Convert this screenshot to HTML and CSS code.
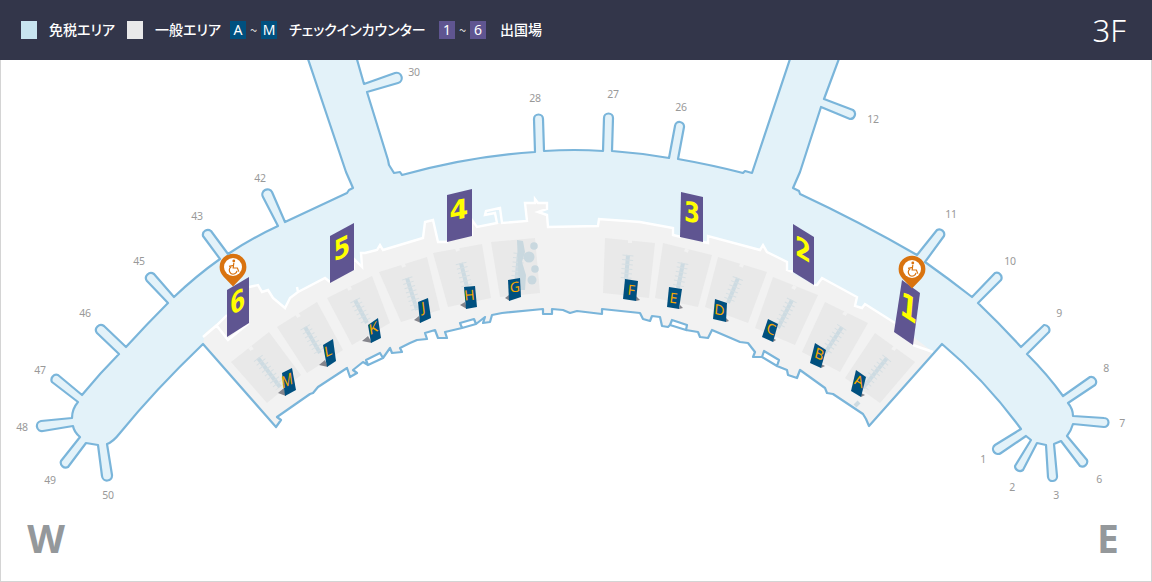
FILE: index.html
```html
<!DOCTYPE html>
<html lang="ja">
<head>
  <meta charset="UTF-8">
  <title>3F フロアマップ</title>
  <link rel="stylesheet" href="styles.css">
</head>
<body>

<div class="page">
  <header class="floor-bar">
    <div class="legend">
      <span class="swatch swatch-duty"></span>
      <span class="legend-text text-duty">免税エリア</span>
      <span class="swatch swatch-general"></span>
      <span class="legend-text text-general">一般エリア</span>
      <span class="chip chip-counter">A</span>
      <span class="tilde">~</span>
      <span class="chip chip-counter">M</span>
      <span class="legend-text text-counter">チェックインカウンター</span>
      <span class="chip chip-gate">1</span>
      <span class="tilde">~</span>
      <span class="chip chip-gate">6</span>
      <span class="legend-text text-gate">出国場</span>
    </div>
    <div class="floor-name">3F</div>
  </header>

  <main class="map">
    <svg class="map-svg" viewBox="1 60 1150 521" width="1150" height="521">
      <defs>
        <path id="outline" d="M107 444 L112 475 A5 5 0 0 1 102 476 L98 445 L86 443 L68 467 A5 5 0 0 1 61 461 L80 437 Q74 432 73 426 L43 431 A5 5 0 0 1 41 421 L72 418 Q72 409 78 402 L52 382 A5 5 0 0 1 58 375 L82 395 Q100 373 119 354 L97 333 A5 5 0 0 1 104 326 L126 347 Q147 324 168 303 L147 281 A5 5 0 0 1 154 274 L174 297 Q196 276 220 259 L203 236 A5 5 0 0 1 211 231 L228 254 Q252 238 278 226 L263 197 A5 5 0 0 1 272 192 L285 222 L347 193 L349 190 L353 188 L346 172 L307 56 L356 56 L364 84 L395 73 A5 5 0 0 1 398 83 L367 92 L388 160 L389 165 L394 173 L400 172 L402 175 Q470 156 535 152 L534 119 A4.5 4.5 0 0 1 543 119 L544 151 Q575 149 603 151 L604 118 A4.5 4.5 0 0 1 613 118 L612 151 Q640 153 669 158 L675 126 A4.5 4.5 0 0 1 684 127 L678 159 Q712 165 743 173 L745 171 L752 173 L757 158 L791 56 L840 56 L824 99 L853 110 A5 5 0 0 1 850 119 L821 107 L800 172 L793 188 L799 191 L800 194 Q860 222 917 255 L937 230 A5 5 0 0 1 944 236 L925 262 Q949 279 972 297 L995 273 A5 5 0 0 1 1001 280 L978 303 Q1000 324 1021 347 L1044 325 A5 5 0 0 1 1049 332 L1027 354 Q1048 375 1063 396 L1090 377 A5 5 0 0 1 1095 385 L1068 403 Q1073 409 1073 416 L1104 418 A4.5 4.5 0 0 1 1104 427 L1073 424 Q1071 431 1067 436 L1087 460 A5 5 0 0 1 1080 466 L1061 441 L1054 444 L1057 476 A4.5 4.5 0 0 1 1048 477 L1046 445 L1037 443 L1023 470 A5 5 0 0 1 1015 466 L1031 440 L1026 436 L1001 453 A5 5 0 0 1 995 445 L1021 429 Q985 380 942 344 L869 426 L866 419 L863 414 L833 394 L827 393 L825 388 L800 370 L797 378 L788 375 L787 370 L777 366 L762 357 L753 357 L755 352 L748 343 L740 342 L712 330 L708 338 L700 337 L698 332 L686 330 L670 325 L668 327 L662 326 L660 317 L652 316 L650 321 L643 319 L640 313 L602 309 L602 314 L577 311 L570 313 L563 310 L552 309 L552 314 L543 314 L543 309 L502 313 L492 315 L490 322 L483 323 L485 317 L476 324 L462 328 L445 332 L447 338 L438 338 L435 330 L425 333 L427 339 L417 340 L410 343 L400 348 L402 352 L392 353 L390 348 L383 358 L368 365 L363 362 L353 370 L357 373 L350 377 L347 368 L318 387 L313 393 L310 394 L277 417 L281 420 L276 427 L203 344 Q155 390 120 433 Q113 442 107 444 Z M777 366 L779 360 L764 351 L762 357 Z M686 330 L687 325 L672 320 L670 325 Z M476 324 L474 319 L460 323 L462 328 Z M383 358 L380 353 L366 360 L368 365 Z"/>
        <clipPath id="inside">
          <use href="#outline"/>
        </clipPath>
        <g id="wheelchair" class="wheel-icon">
          <circle class="wheel-head" cx="0.8" cy="-6" r="1.4"/>
          <path d="M0.8 -4 L0.2 1 L4.4 1 L5.8 4.6"/>
          <path d="M0.6 -1.6 L-4 -0.6"/>
          <path d="M-1.8 -0.2 A3.9 3.9 0 1 0 4 3.8"/>
        </g>
      </defs>

      <use href="#outline" class="air-fill"/>

      <path class="land" clip-path="url(#inside)" d="M203 344 L205 333 L227 315 L249 287 L258 285 L262 292 L268 290 L273 298 L285 308 L290 298 L297 293 L298 292 L325 278 L330 282 L354 270 L353 258 L362 267 L361 253 L365 253 L377 250 L380 245 L383 250 L423 238 L425 222 L433 220 L438 242 L472 236 L472 220 L477 227 L497 223 L502 223 L527 221 L525 203 L535 203 L535 199 L538 203 L547 203 L547 209 L538 212 L547 215 L548 227 L598 226 L599 219 L640 222 L673 228 L673 235 L703 242 L708 243 L708 236 L760 250 L763 245 L767 252 L787 262 L787 270 L814 285 L817 285 L822 278 L857 297 L855 306 L862 308 L865 304 L895 323 L933 352 L942 344 L869 432 L276 432 Z"/>

      <path class="land-edge" d="M203 337 L217 325 L227 315 M217 326 L228 340 L249 323 M249 287 L258 285 L262 292 L268 290 L273 298 L285 308 L290 298 L298 292 L297 287 L298 292 L325 278 L330 282 M354 270 L353 258 L362 267 L361 253 L365 253 L377 250 L380 245 L383 250 L423 238 L425 222 L433 220 L438 242 L448 242 M472 236 L472 220 L477 227 L497 223 L495 213 L485 215 L486 211 L500 208 L502 223 L527 221 L525 203 L535 203 L535 199 L538 203 L547 203 L547 209 L538 212 L547 215 L548 227 L598 226 L599 219 L640 222 L673 228 L673 235 L681 237 M703 242 L708 243 L708 236 L760 250 L763 245 L767 252 L787 262 L787 270 L793 272 M814 285 L817 285 L822 278 L857 297 L855 306 L862 308 L865 304 L895 323 M913 345 L933 352"/>

      <polygon class="zone" points="231,362 269,332 301,375 267,403"/>
      <polygon class="zone" points="277,327 317,302 343,350 307,373"/>
      <polygon class="zone" points="327,298 372,276 390,323 352,345"/>
      <polygon class="zone" points="379,272 427,257 440,310 401,322"/>
      <polygon class="zone" points="433,253 482,244 491,298 448,307"/>
      <polygon class="zone" points="491,242 535,238 540,293 500,297"/>
      <polygon class="zone" points="605,238 655,243 649,298 603,293"/>
      <polygon class="zone" points="663,243 712,255 698,307 655,298"/>
      <polygon class="zone" points="718,257 767,272 748,323 705,307"/>
      <polygon class="zone" points="773,277 818,295 795,345 755,328"/>
      <polygon class="zone" points="825,302 868,323 840,372 802,352"/>
      <polygon class="zone" points="875,333 915,362 880,403 845,378"/>

      <g class="zone-notches">
        <line x1="250" y1="347" x2="252" y2="350"/>
        <line x1="297" y1="314" x2="299" y2="317"/>
        <line x1="349" y1="287" x2="350" y2="290"/>
        <line x1="403" y1="264" x2="404" y2="267"/>
        <line x1="457" y1="248" x2="458" y2="251"/>
        <line x1="630" y1="240" x2="630" y2="243"/>
        <line x1="687" y1="249" x2="686" y2="252"/>
        <line x1="742" y1="264" x2="741" y2="267"/>
        <line x1="795" y1="286" x2="793" y2="289"/>
        <line x1="846" y1="312" x2="844" y2="315"/>
        <line x1="895" y1="347" x2="893" y2="350"/>
      </g>

      <g class="belts">
        <line x1="258" y1="358" x2="280" y2="387"/>
        <line x1="305" y1="327" x2="320" y2="353"/>
        <line x1="355" y1="300" x2="367" y2="323"/>
        <line x1="407" y1="278" x2="417" y2="310"/>
        <line x1="461" y1="263" x2="467" y2="287"/>
        <line x1="519" y1="253" x2="516" y2="285"/>
        <line x1="628" y1="255" x2="626" y2="280"/>
        <line x1="683" y1="263" x2="678" y2="288"/>
        <line x1="738" y1="278" x2="728" y2="303"/>
        <line x1="792" y1="300" x2="778" y2="328"/>
        <line x1="842" y1="327" x2="825" y2="353"/>
        <line x1="887" y1="358" x2="863" y2="388"/>
        <line x1="859" y1="402" x2="855" y2="406"/>
      </g>
      <g class="barbs">
        <line x1="258" y1="358" x2="280" y2="387"/>
        <line x1="305" y1="327" x2="320" y2="353"/>
        <line x1="355" y1="300" x2="367" y2="323"/>
        <line x1="407" y1="278" x2="417" y2="310"/>
        <line x1="461" y1="263" x2="467" y2="287"/>
        <line x1="519" y1="253" x2="516" y2="285"/>
        <line x1="628" y1="255" x2="626" y2="280"/>
        <line x1="683" y1="263" x2="678" y2="288"/>
        <line x1="738" y1="278" x2="728" y2="303"/>
        <line x1="792" y1="300" x2="778" y2="328"/>
        <line x1="842" y1="327" x2="825" y2="353"/>
        <line x1="887" y1="358" x2="863" y2="388"/>
      </g>

      <g class="pond">
        <path d="M517 240 L523 241 L525 252 L522 262 L526 275 L525 290 L519 290 Z"/>
        <circle cx="534" cy="246" r="3.8"/>
        <circle cx="529" cy="257" r="5.5"/>
        <circle cx="535" cy="269" r="3.8"/>
        <circle cx="532" cy="280" r="4.5"/>
      </g>

      <g class="shadows">
        <polygon points="278,393 284,388 286,396"/>
        <polygon points="319,365 325,360 328,367"/>
        <polygon points="362,341 368,336 372,343"/>
        <polygon points="414,320 419,316 421,323"/>
        <polygon points="460,305 465,302 467,309"/>
        <polygon points="505,298 509,295 510,301"/>
        <polygon points="636,296 640,300 636,301"/>
        <polygon points="680,305 683,308 679,309"/>
        <polygon points="726,318 729,321 726,322"/>
        <polygon points="773,338 776,340 773,342"/>
        <polygon points="821,364 825,366 821,368"/>
        <polygon points="861,393 865,395 861,397"/>
      </g>

      <g class="signs">
        <polygon points="282,373 292,368 296,390 285,396"/>
        <polygon points="323,345 333,339 336,361 327,367"/>
        <polygon points="368,325 378,318 381,338 371,343"/>
        <polygon points="418,302 428,298 431,318 420,323"/>
        <polygon points="464,287 475,286 477,307 466,309"/>
        <polygon points="508,280 520,278 521,297 509,301"/>
        <polygon points="625,279 638,281 636,301 623,299"/>
        <polygon points="669,287 682,289 679,309 667,307"/>
        <polygon points="715,299 727,303 726,322 713,319"/>
        <polygon points="768,319 778,324 773,342 762,337"/>
        <polygon points="815,343 826,350 821,368 810,363"/>
        <polygon points="856,370 866,377 861,397 851,391"/>
      </g>
      <g class="sign-letters">
        <text transform="matrix(0.85 -0.42 0.15 1.15 288 386)">M</text>
        <text transform="matrix(1 -0.5 0.16 1 329 356)">L</text>
        <text transform="matrix(1 -0.55 0.15 1 374 333)">K</text>
        <text transform="matrix(1 -0.35 0.12 1 424 312)">J</text>
        <text transform="matrix(1 -0.08 0.1 1 470 300)">H</text>
        <text transform="matrix(1 -0.15 0.05 1 515 292)">G</text>
        <text transform="matrix(1 0.13 -0.1 1 631 295)">F</text>
        <text transform="matrix(1 0.13 -0.13 1 673 303)">E</text>
        <text transform="matrix(1 0.3 -0.08 1 719 315)">D</text>
        <text transform="matrix(0.95 0.45 -0.25 1 770 334)">C</text>
        <text transform="matrix(0.95 0.5 -0.25 1 818 359)">B</text>
        <text transform="matrix(0.95 0.55 -0.22 1 858 386)">A</text>
      </g>

      <g class="gates">
        <polygon points="227,290 249,277 249,323 227,337"/>
        <polygon points="330,236 354,223 354,270 330,283"/>
        <polygon points="447,195 472,189 472,236 447,242"/>
        <polygon points="681,192 703,197 703,242 680,237"/>
        <polygon points="793,224 814,237 814,285 793,272"/>
        <polygon points="902,280 920,293 913,345 894,332"/>
      </g>
      <g class="gate-numbers">
        <text transform="matrix(0.8 -0.45 0.05 1.05 238 311.5)">6</text>
        <text transform="matrix(0.88 -0.42 0.02 1.05 342 258)">5</text>
        <text transform="matrix(1 -0.2 0 1 459 219)">4</text>
        <text transform="matrix(0.85 0.16 0 1.02 692 222)">3</text>
        <text transform="matrix(0.85 0.5 0 1.02 803 259)">2</text>
        <text transform="matrix(0.95 0.62 -0.1 1.2 908 319)">1</text>
      </g>

      <g class="pin" transform="translate(233,267)">
        <path class="pin-body" d="M0 19.5 L-9.6 9.4 A13.4 13.4 0 1 1 9.6 9.4 Z"/>
        <circle class="pin-face" r="9"/>
        <use href="#wheelchair"/>
      </g>
      <g class="pin" transform="translate(912,269)">
        <path class="pin-body" d="M0 19.5 L-9.6 9.4 A13.4 13.4 0 1 1 9.6 9.4 Z"/>
        <circle class="pin-face" r="9"/>
        <use href="#wheelchair"/>
      </g>

      <use href="#outline" class="air-line"/>

      <g class="gate-labels">
        <text x="414" y="76">30</text>
        <text x="535" y="102">28</text>
        <text x="613" y="98">27</text>
        <text x="681" y="111">26</text>
        <text x="873" y="123">12</text>
        <text x="951" y="218">11</text>
        <text x="1010" y="265">10</text>
        <text x="1059" y="317">9</text>
        <text x="1106" y="372">8</text>
        <text x="1122" y="427">7</text>
        <text x="1099" y="483">6</text>
        <text x="1056" y="499">3</text>
        <text x="1012" y="491">2</text>
        <text x="983" y="463">1</text>
        <text x="108" y="499">50</text>
        <text x="50" y="484">49</text>
        <text x="22" y="431">48</text>
        <text x="40" y="374">47</text>
        <text x="85" y="317">46</text>
        <text x="139" y="265">45</text>
        <text x="197" y="220">43</text>
        <text x="260" y="182">42</text>
      </g>

      <text class="compass" x="46" y="553">W</text>
      <text class="compass" x="1108" y="553">E</text>
    </svg>
  </main>
</div>

</body>
</html>
```

FILE: styles.css
```css
html, body {
  height: 100%;
  margin: 0;
  padding: 0;
  background-color: #fff;
  overflow: hidden;
}

.page {
  display: flex;
  flex-direction: column;
  width: 1152px;
  height: 582px;
}

.floor-bar {
  flex: 0 0 60px;
  display: flex;
  justify-content: space-between;
  align-items: center;
  padding: 0 26px 0 21px;
  background-color: #33364a;
  color: #fff;
}

.legend {
  display: flex;
  align-items: center;
  font-family: "Noto Sans CJK JP", "Noto Sans", sans-serif;
  font-size: 14px;
  line-height: 18px;
  font-weight: 500;
}

.swatch {
  width: 16px;
  height: 18px;
}

.swatch-duty {
  background-color: #c7e4ef;
}

.swatch-general {
  background-color: #e9e9e9;
}

.legend-text {
  white-space: nowrap;
  font-feature-settings: "palt";
  margin-top: -2px;
}

.text-duty {
  margin-left: 12px;
  margin-right: 11px;
  width: 67px;
}

.text-general {
  margin-left: 12px;
  margin-right: 8px;
  width: 67px;
}

.text-counter {
  margin-left: 12px;
  margin-right: 13px;
  width: 137px;
}

.text-gate {
  margin-left: 14px;
}

.chip {
  width: 16px;
  height: 18px;
  text-align: center;
  font-family: "Noto Sans", sans-serif;
  font-size: 14px;
  font-weight: 400;
}

.chip-counter {
  background-color: #00507f;
}

.chip-gate {
  background-color: #5f5591;
}

.tilde {
  width: 15px;
  text-align: center;
  font-size: 13px;
  font-weight: 400;
  color: #ddd;
}

.floor-name {
  font-family: "Noto Sans", sans-serif;
  font-size: 31px;
  font-weight: 300;
}

.map {
  flex: 1;
  border: 1px solid #d4d4d4;
  border-top: none;
}

.map-svg {
  display: block;
}

.air-fill {
  fill: #e3f2f9;
}

.air-line {
  fill: none;
  stroke: #7ab5da;
  stroke-width: 2.2;
  stroke-linejoin: round;
}

.land {
  fill: #f2f2f2;
}

.land-edge {
  fill: none;
  stroke: #fff;
  stroke-width: 2.4;
}

.zone {
  fill: #e9e9e9;
}

.zone-notches line {
  stroke: #f2f2f2;
  stroke-width: 4;
}

.belts line {
  stroke: #cddbe2;
  stroke-width: 4;
}

.barbs line {
  stroke: #d6dfe3;
  stroke-width: 11;
  stroke-dasharray: 1 3.5;
}

.pond {
  fill: #c9d8df;
}

.shadows {
  fill: #85858c;
}

.signs {
  fill: #00507f;
}

.sign-letters text {
  font-family: "Noto Sans", sans-serif;
  font-size: 14px;
  fill: #f5a800;
  text-anchor: middle;
}

.gates {
  fill: #5f5591;
}

.gate-numbers text {
  font-family: "DejaVu Sans", sans-serif;
  font-size: 27px;
  font-weight: bold;
  fill: #ff0;
  text-anchor: middle;
}

.pin-body {
  fill: #d9730f;
}

.pin-face {
  fill: #fff;
}

.wheel-icon {
  fill: none;
  stroke: #d9730f;
  stroke-width: 1.2;
}

.wheel-head {
  fill: #d9730f;
  stroke: none;
}

.gate-labels text {
  font-family: "Noto Sans", sans-serif;
  font-size: 10.5px;
  letter-spacing: -0.3px;
  fill: #999;
  text-anchor: middle;
}

.compass {
  font-family: "Noto Sans", sans-serif;
  font-size: 39px;
  font-weight: 700;
  fill: #94989b;
  text-anchor: middle;
}
```
